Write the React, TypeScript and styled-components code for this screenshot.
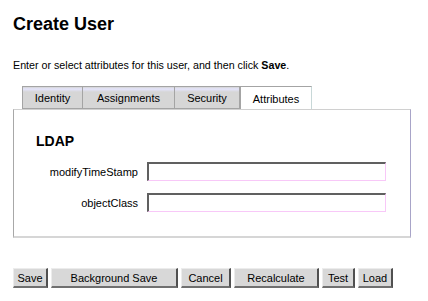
import React from "react";
import styled, { createGlobalStyle } from "styled-components";

const GlobalStyle = createGlobalStyle`
  body {
    margin: 0;
    background: #ffffff;
    font-family: "Liberation Sans", Arial, sans-serif;
    color: #000000;
  }
`;

const Page = styled.div`
  width: 428px;
  height: 301px;
  padding: 13px 0 0 13px;
  box-sizing: border-box;
`;

const Title = styled.h1`
  margin: 0;
  font-size: 18px;
  line-height: 22px;
  font-weight: bold;
`;

const Intro = styled.p`
  margin: 24px 0 0 0;
  font-size: 10.7px;
  line-height: 13px;
`;

const TabBar = styled.div`
  display: flex;
  margin: 14px 0 0 9px;
  height: 23px;
`;

const Tab = styled.div<{ $active?: boolean; $w: number }>`
  width: ${(p) => p.$w}px;
  box-sizing: border-box;
  display: flex;
  align-items: center;
  justify-content: center;
  font-size: 11px;
  padding-top: 1px;
  border: 1px solid #a4a4a4;
  border-left: ${(p) => (p.$active ? "1px solid #a4a4a4" : "none")};
  border-bottom: ${(p) => (p.$active ? "none" : "1px solid #a4a4a4")};
  border-right-color: ${(p) => (p.$active ? "#c8d8d8" : "#a4a4a4")};
  background: ${(p) =>
    p.$active
      ? "#ffffff"
      : "linear-gradient(to bottom, #d4d4d4 0px, #e4e4fc 2px, #d6d6d6 5px, #d6d6d6 100%)"};
  position: relative;
  z-index: ${(p) => (p.$active ? 1 : 0)};
  &:first-child {
    border-left: 1px solid #a4a4a4;
  }
`;

const Panel = styled.div`
  width: 398px;
  box-sizing: border-box;
  border-top: 1px solid #d0d0d0;
  border-left: 1px solid #a8a8a8;
  border-right: 1px solid #a8a4c8;
  border-bottom: 2px solid #d6d6d6;
  padding: 23px 0 24px 22px;
`;

const Section = styled.h2`
  margin: 0;
  font-size: 14px;
  line-height: 16px;
  font-weight: bold;
`;

const Form = styled.div`
  display: grid;
  grid-template-columns: 102px 239px;
  column-gap: 9px;
  row-gap: 12px;
  margin-top: 13px;
  align-items: center;
`;

const Label = styled.label`
  font-size: 11px;
  text-align: right;
`;

const Field = styled.input`
  width: 239px;
  height: 19px;
  box-sizing: border-box;
  margin: 0;
  padding: 0 3px;
  border-top: 2px solid #606060;
  border-left: 2px solid #606060;
  border-right: 1px solid #f8c8f8;
  border-bottom: 1px solid #f8c8f8;
  background: #ffffff;
  font-size: 11px;
  outline: none;
`;

const Buttons = styled.div`
  display: flex;
  gap: 3px;
  margin-top: 30px;
`;

const Button = styled.button<{ $w: number }>`
  width: ${(p) => p.$w}px;
  height: 20px;
  box-sizing: border-box;
  margin: 0;
  padding: 0;
  font-family: "Liberation Sans", Arial, sans-serif;
  font-size: 11px;
  color: #000000;
  background: #d8d8d8;
  border-top: 1px solid #ececec;
  border-left: 1px solid #ececec;
  border-right: 2px solid #505050;
  border-bottom: 2px solid #707070;
`;

const tabs = [
  { name: "Identity", w: 61 },
  { name: "Assignments", w: 92 },
  { name: "Security", w: 65 },
  { name: "Attributes", w: 72, active: true },
];

const actions = [
  { name: "Save", w: 35 },
  { name: "Background Save", w: 127 },
  { name: "Cancel", w: 50 },
  { name: "Recalculate", w: 85 },
  { name: "Test", w: 33 },
  { name: "Load", w: 35 },
];

const App = () => {
  return (
    <Page>
      <GlobalStyle />
      <Title>Create User</Title>
      <Intro>
        Enter or select attributes for this user, and then click <b>Save</b>.
      </Intro>
      <TabBar>
        {tabs.map((t) => (
          <Tab key={t.name} $w={t.w} $active={t.active}>
            {t.name}
          </Tab>
        ))}
      </TabBar>
      <Panel>
        <Section>LDAP</Section>
        <Form>
          <Label>modifyTimeStamp</Label>
          <Field type="text" />
          <Label>objectClass</Label>
          <Field type="text" />
        </Form>
      </Panel>
      <Buttons>
        {actions.map((a) => (
          <Button key={a.name} $w={a.w}>
            {a.name}
          </Button>
        ))}
      </Buttons>
    </Page>
  );
};

export default App;
